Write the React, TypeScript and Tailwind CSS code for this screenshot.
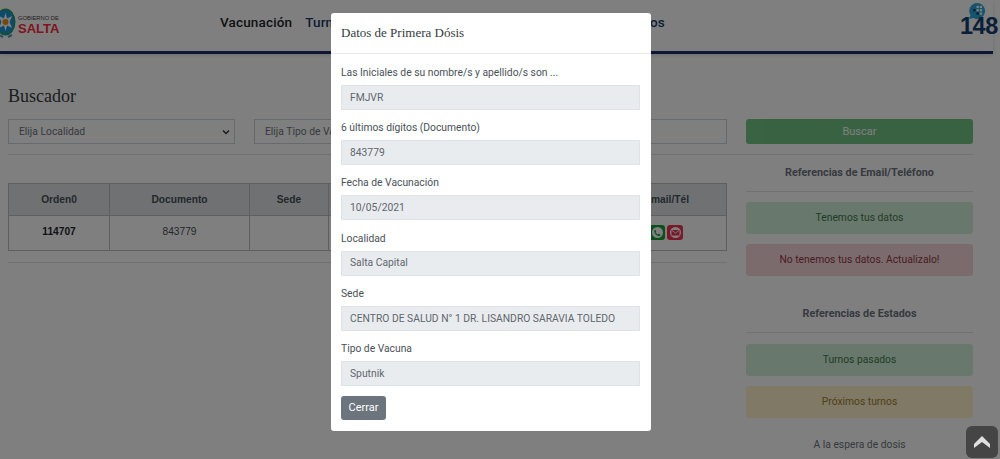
const fields = [
  { label: 'Las Iniciales de su nombre/s y apellido/s son ...', value: 'FMJVR' },
  { label: '6 últimos dígitos (Documento)', value: '843779' },
  { label: 'Fecha de Vacunación', value: '10/05/2021' },
  { label: 'Localidad', value: 'Salta Capital' },
  { label: 'Sede', value: 'CENTRO DE SALUD N° 1 DR. LISANDRO SARAVIA TOLEDO' },
  { label: 'Tipo de Vacuna', value: 'Sputnik' },
];

function SaltaLogo() {
  return (
    <div className="flex items-start gap-[2px] -ml-[5px]">
      <svg className="w-[21px] h-[32px]" viewBox="0 0 21 32">
        <ellipse cx="10.5" cy="15" rx="10" ry="13.5" fill="#2a9a62" />
        <ellipse cx="10.5" cy="15" rx="8.5" ry="12" fill="#1a96d8" />
        <path d="M10.5 6l1.6 5.4 4.9-2.4-2.4 6 2.4 6-4.9-2.4-1.6 5.4-1.6-5.4-4.9 2.4 2.4-6-2.4-6 4.9 2.4z" fill="#fff" />
        <circle cx="10.5" cy="15" r="3" fill="#e8921e" />
        <path d="M4 28l4 2M17 28l-4 2" stroke="#4f9ac0" strokeWidth="2" />
      </svg>
      <div className="flex flex-col mt-[9px] font-['Liberation_Sans',sans-serif] leading-none">
        <span className="text-[5.800px] text-[#444] whitespace-nowrap">GOBIERNO DE</span>
        <span className="text-[13px] font-bold text-[#ff2a3c]">SALTA</span>
      </div>
    </div>
  );
}

function Logo148() {
  return (
    <div className="relative w-[40px] h-[38px] -mr-[7px]">
      <svg className="absolute left-[8px] top-[1px] w-[18px] h-[18px]" viewBox="0 0 19 19">
        <path d="M9.5 1a8.5 8.5 0 1 1-4 16L1 18l1.6-4A8.5 8.5 0 0 1 9.5 1z" fill="#2aa8d8" />
        <g fill="#fff">
          <rect x="9" y="4" width="2.4" height="2.4" />
          <rect x="12.5" y="4" width="2.4" height="2.4" />
          <rect x="5.5" y="7.5" width="2.4" height="2.4" fill="#0b2f55" />
          <rect x="9" y="7.5" width="2.4" height="2.4" />
          <rect x="12.5" y="7.5" width="2.4" height="2.4" />
          <rect x="9" y="11" width="2.4" height="2.4" fill="#0b2f55" />
          <rect x="12.5" y="11" width="2.4" height="2.4" />
        </g>
      </svg>
      <span className="absolute left-0 top-[13px] font-['Liberation_Sans',sans-serif] font-bold text-[23.500px] leading-[24px] tracking-[-0.5px] text-[#134070]">148</span>
    </div>
  );
}

function Header() {
  return (
    <header className="h-[54px] w-[993px] border-b-[3px] border-[#1a2f66] flex items-start justify-between pt-[1px] shadow-[0_1px_4px_rgba(0,0,0,0.15)]">
      <div className="mt-[6px]">
        <SaltaLogo />
      </div>
      <nav className="absolute left-[220px] top-[12px] flex gap-[13px] text-[13.5px] font-medium tracking-[0.15px] text-[#212529]">
        <span>Vacunación</span>
        <span className="text-[#1a3a66]">Turnos</span>
      </nav>
      <span className="absolute left-[629px] top-[12px] text-[13.5px] font-medium tracking-[0.15px] text-[#1a3a66]">Datos</span>
      <Logo148 />
    </header>
  );
}

function Note({ className, children }: { className: string; children: string }) {
  return (
    <div className={`h-[32px] rounded-[3px] flex items-center justify-center text-[10.3px] ${className}`}>
      {children}
    </div>
  );
}

function SideTitle({ children }: { children: string }) {
  return <h5 className="text-center text-[10.8px] leading-[16px] font-bold text-[#6c757d] pb-[10px] border-b border-[#dee2e6]">{children}</h5>;
}

function Search() {
  return (
    <section className="px-[8px] pt-[30px]">
      <h2 className="font-['Liberation_Serif',serif] text-[18px] leading-[24px] text-[#343a40]">Buscador</h2>
      <div className="grid grid-cols-4 gap-[19px] mt-[11px] w-[965px] text-[10.3px]">
        <div className="h-[25px] border border-[#ced4da] flex items-center justify-between pl-[10px] pr-[3px] text-[#6c757d]">
          Elija Localidad
          <svg className="w-[10px] h-[10px]" viewBox="0 0 10 10"><path d="M2 3.5l3 3 3-3" fill="none" stroke="#343a40" strokeWidth="1.5" /></svg>
        </div>
        <div className="h-[25px] border border-[#ced4da] flex items-center pl-[10px] text-[#6c757d]">Elija Tipo de Vacuna</div>
        <div className="h-[25px] border border-[#ced4da]" />
        <button className="h-[25px] pt-[1px] rounded-[3px] bg-[#28a745] opacity-65 text-white text-[11px]">Buscar</button>
      </div>
      <div className="w-[965px] border-t border-[#dee2e6] mt-[10px]" />
    </section>
  );
}

function Results() {
  return (
    <section className="flex gap-[19px] px-[8px] w-[981px] mt-[10px]">
      <div className="w-[719px] pt-[18px]">
        <table className="w-[719px] border-collapse table-fixed text-center font-['Liberation_Sans',sans-serif] text-[10.2px] text-[#212529]">
          <thead>
            <tr className="h-[32px] bg-[#dee2e6] font-bold text-[#495057]">
              <th className="w-[101px] border border-[#bbbfc3]">Orden0</th>
              <th className="w-[140px] border border-[#bbbfc3]">Documento</th>
              <th className="w-[79px] border border-[#bbbfc3]">Sede</th>
              <th className="border border-[#bbbfc3]" />
              <th className="w-[110px] border border-[#bbbfc3] text-right pr-[37px] whitespace-nowrap">Email/Tél</th>
            </tr>
          </thead>
          <tbody>
            <tr className="h-[35px] align-top">
              <td className="border border-[#bbbfc3] pt-[8px] font-bold">114707</td>
              <td className="border border-[#bbbfc3] pt-[8px] text-[#495057]">843779</td>
              <td className="border border-[#bbbfc3]" />
              <td className="border border-[#bbbfc3]" />
              <td className="border border-[#bbbfc3] pt-[9px]">
                <div className="flex gap-[2px] justify-end pr-[43px]">
                  <span className="w-[16px] h-[15px] rounded-[3px] bg-[#12a035] flex items-center justify-center">
                    <svg className="w-[13px] h-[13px]" viewBox="0 0 13 13">
                      <circle cx="6.5" cy="6.5" r="5.5" fill="#fff" />
                      <path d="M4.2 3.5l1 2-.6.8c.5 1 1.2 1.7 2.2 2.2l.8-.7 2 1c-.3.9-1 1.3-1.8 1.2C5.600 9.700 3.600 7.700 3.300 5.400c-.1-.8.2-1.500.9-1.900z" fill="#12a035" />
                    </svg>
                  </span>
                  <span className="w-[16px] h-[15px] rounded-[3px] bg-[#f03050] flex items-center justify-center">
                    <svg className="w-[13px] h-[13px]" viewBox="0 0 13 13">
                      <circle cx="6.5" cy="6.5" r="5.5" fill="#fff" />
                      <rect x="2.500" y="4" width="8" height="5.500" fill="#f03050" />
                      <path d="M3 4.500l3.500 2.500 3.500-2.500" fill="none" stroke="#fff" strokeWidth="0.9" />
                    </svg>
                  </span>
                </div>
              </td>
            </tr>
          </tbody>
        </table>
        <div className="border-t border-[#dee2e6] mt-[11px]" />
      </div>
      <aside className="w-[227px] flex flex-col">
        <SideTitle>Referencias de Email/Teléfono</SideTitle>
        <div className="flex flex-col gap-[10px] mt-[10px]">
          <Note className="bg-[#d2f0da] text-[#3f7a4c]">Tenemos tus datos</Note>
          <Note className="bg-[#f8d7da] text-[#8f3a48]">No tenemos tus datos. Actualizalo!</Note>
        </div>
        <div className="mt-[30px]">
          <SideTitle>Referencias de Estados</SideTitle>
        </div>
        <div className="flex flex-col gap-[10px] mt-[11px]">
          <Note className="bg-[#d2f0da] text-[#3f7a4c]">Turnos pasados</Note>
          <Note className="bg-[#fff3cd] text-[#9c8030]">Próximos turnos</Note>
        </div>
        <p className="text-center text-[10.3px] text-[#6c757d] mt-[19px]">A la espera de dosis</p>
      </aside>
    </section>
  );
}

function Modal() {
  return (
    <div className="fixed inset-0 bg-black/50">
      <div className="w-[320px] h-[418px] mx-auto mt-[13px] -translate-x-[9px] bg-white rounded-[3px] text-[10.3px]">
        <div className="h-[41px] border-b border-[#e9ecef] flex items-center px-[10px]">
          <h5 className="font-['Liberation_Serif',serif] text-[13px] text-[#343a40]">Datos de Primera Dósis</h5>
        </div>
        <div className="px-[10px] pt-[11px] flex flex-col gap-[10.2px]">
          {fields.map((f) => (
            <div key={f.label} className="flex flex-col">
              <label className="h-[20px] leading-[15px] text-[#495057]">{f.label}</label>
              <div className="h-[25px] w-[299px] bg-[#e9ecef] border border-[#dfe3e7] flex items-center pl-[8px] text-[#5f666d]">
                {f.value}
              </div>
            </div>
          ))}
          <button className="w-[45px] h-[24px] rounded-[3px] bg-[#6c757d] text-white text-[11px]">Cerrar</button>
        </div>
      </div>
    </div>
  );
}

export default function App() {
  return (
    <div className="relative h-[459px] w-[1000px] overflow-hidden bg-white font-['Roboto',sans-serif] text-[11px]">
      <Header />
      <Search />
      <Results />
      <Modal />
      <button className="fixed left-[966px] top-[426px] w-[32px] h-[32px] rounded-[6px] bg-[#454545] flex items-center justify-center">
        <svg className="w-[16px] h-[12px]" viewBox="0 0 16 12">
          <path d="M8 0l8 8v4l-8-6-8 6V8z" fill="#e0e0e0" />
        </svg>
      </button>
    </div>
  );
}
